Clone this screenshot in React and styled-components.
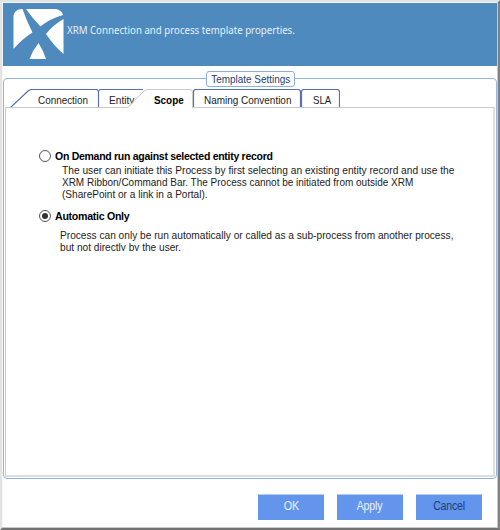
import React from 'react';
import styled, { createGlobalStyle } from 'styled-components';

const GlobalStyle = createGlobalStyle`
  * { box-sizing: border-box; }
  body { margin: 0; background: #fff; }
`;

const Window = styled.main`
  width: 500px;
  height: 530px;
  display: flex;
  flex-direction: column;
  padding: 1px;
  background: #fff;
  border-style: solid;
  border-width: 2px;
  border-color: #e3e3e3 #818181 #727272 #e3e3e3;
  box-shadow: inset -1px -1px #c8c8c8, inset 1px 1px #f6f6f6;
  font: 11px/12px 'Liberation Sans', Arial, sans-serif;
  color: #1c1c1c;
`;

const Header = styled.header`
  height: 63px;
  flex: none;
  display: flex;
  align-items: flex-start;
  padding: 5px 0 0 10px;
  background: #4e8abe;
  color: #e4f0fa;
`;

const Logo = styled.svg`
  width: 51px;
  height: 52px;
  flex: none;
`;

const Title = styled.h1`
  margin: 15px 0 0 3px;
  font: 11px/14px 'Noto Sans', 'Open Sans', sans-serif;
  white-space: nowrap;
`;

/* Narrowed run of text; $fit is its horizontal scale. */
const Narrow = styled.span`
  position: relative;
  display: inline-block;
  transform: scaleX(${p => p.$fit});
  transform-origin: ${p => (p.$centered ? 'center' : 'left')};
`;

const Group = styled.section`
  height: 401px;
  flex: none;
  display: flex;
  flex-direction: column;
  margin-top: 12px;
  padding: 0 1px 1px;
  border: 1px solid #94b6e4;
  border-radius: 4px;
`;

const Legend = styled.h2`
  align-self: center;
  width: 89px;
  height: 16px;
  flex: none;
  margin: -8px 0 0 1px;
  border: 1px solid #8eafdf;
  border-radius: 3px;
  background: #fff;
  color: #1f4173;
  font-size: 11px;
  font-weight: 400;
  line-height: 14px;
  display: flex;
  justify-content: center;
  white-space: nowrap;
`;

const Tabs = styled.nav`
  display: flex;
  height: 19px;
  flex: none;
  margin: 2px 0 -1px 5px;
  position: relative;
`;

const Tab = styled.button`
  position: relative;
  width: ${p => p.$width}px;
  height: 19px;
  margin: 0 0 0 ${p => p.$overlap || 0}px;
  padding: 3px 0 0 ${p => p.$inset}px;
  border: 0;
  background: none;
  color: ${p => (p.$active ? '#000' : '#1c1c1c')};
  font: ${p => (p.$active ? 700 : 400)} 11px/14px 'Liberation Sans', Arial, sans-serif;
  text-align: left;
  white-space: nowrap;
`;

const TabShape = styled.svg`
  position: absolute;
  inset: 0;
  width: 100%;
  height: ${p => (p.$active ? 19 : 18)}px;
  fill: #fff;
  stroke: ${p => (p.$active ? '#c9c9c9' : '#5871b5')};
  stroke-width: ${p => (p.$active ? 1 : 1.2)};
`;

const Panel = styled.div`
  flex: 1;
  padding: 41px 0 0 33px;
  border: 1px solid #c9c9c9;
  border-right: 2px solid #dedede;
  border-bottom: 2px solid #dedede;
`;

const Option = styled.label`
  display: flex;
  align-items: center;
  height: 14px;
  margin-top: ${p => p.$gap || 0}px;
  color: #000;
  font-weight: 700;
  letter-spacing: -0.3px;
  white-space: nowrap;
`;

const Radio = styled.span`
  width: 12px;
  height: 12px;
  flex: none;
  display: grid;
  place-items: center;
  margin-right: 4px;
  border: 1px solid #555;
  border-radius: 50%;

  &::after {
    content: '';
    width: 6px;
    height: 6px;
    border-radius: 50%;
    background: ${p => (p.$checked ? '#333' : 'transparent')};
  }
`;

const Description = styled.div`
  margin: ${p => p.$top}px 0 0 ${p => p.$left}px;
  height: ${p => p.$height}px;
  overflow: hidden;
`;

const Line = styled.div`
  height: 12px;
  white-space: nowrap;
`;

const Footer = styled.footer`
  display: flex;
  justify-content: flex-end;
  gap: 13px;
  padding: 15px 15px 0 0;
`;

const ActionButton = styled.button`
  width: 66px;
  height: 26px;
  padding: 0 0 2px;
  border: 0;
  border-top: 1px solid #b4cbf5;
  background: #6495ed;
  color: ${p => (p.$dark ? '#1d3c78' : '#e8f1ff')};
  font: 12px/23px 'Liberation Sans', Arial, sans-serif;
  letter-spacing: -0.2px;
`;

function TabItem({ label, active, path, fit, ...props }) {
  return (
    <Tab $active={active} {...props}>
      <TabShape $active={active}><path d={path} /></TabShape>
      <Narrow $fit={fit}>{label}</Narrow>
    </Tab>
  );
}

export default function App() {
  return (
    <>
      <GlobalStyle />
      <Window>
        <Header>
          <Logo viewBox="0 0 51 52" fill="#fff">
            <path d="M9 1C4 1 .5 4 .5 9V41Q9 31 19.500 24.500Q14 14 9.500 1Z" />
            <path d="M13 1H43Q48.500 2 50 7Q36 11 27.500 18.500Q20 11 13 1Z" />
            <path d="M50.500 11V46Q41 38 33 26Q40 17 50.500 11Z" />
            <path d="M25.500 35Q30 42 33 51H16.500Q20 42 25.500 35Z" />
          </Logo>
          <Title><Narrow $fit={0.88}>XRM Connection and process template properties.</Narrow></Title>
        </Header>
        <Group>
          <Legend><Narrow $fit={0.905} $centered>Template Settings</Narrow></Legend>
          <Tabs>
            <TabItem label="Connection" fit={0.9} $width={89} $inset={28} path="M.5 18.500L17 3Q19.500 .5 22 .5H86Q88.500 .5 88.500 3V19.500" />
            <TabItem label="Entity" fit={0.92} $width={46} $inset={10} path="M-.5 19.500V3Q-.5 .5 2 .5H44" />
            <TabItem label="Scope" active fit={0.9} $width={67} $overlap={-19} $inset={28} path="M-1 20.500L.5 18.500L3 17.500L17 3Q19.500 .5 22 .5H64Q66.500 .5 66.500 3V20.500" />
            <TabItem label="Naming Convention" fit={0.905} $width={108} $inset={11} path="M.5 19.500V3Q.5 .5 3 .5H105Q107.500 .5 107.500 3V19.500" />
            <TabItem label="SLA" fit={0.88} $width={39} $inset={12} path="M.5 19.500V3Q.5 .5 3 .5H36Q38.500 .5 38.500 3V19.500" />
          </Tabs>
          <Panel>
            <Option><Radio /><Narrow $fit={0.956}>On Demand run against selected entity record</Narrow></Option>
            <Description $top={1} $left={23} $height={36}>
              <Line><Narrow $fit={0.926}>The user can initiate this Process by first selecting an existing entity record and use the</Narrow></Line>
              <Line><Narrow $fit={0.908}>XRM Ribbon/Command Bar. The Process cannot be initiated from outside XRM</Narrow></Line>
              <Line><Narrow $fit={0.916}>(SharePoint or a link in a Portal).</Narrow></Line>
            </Description>
            <Option $gap={9}><Radio $checked /><Narrow $fit={0.965}>Automatic Only</Narrow></Option>
            <Description $top={6} $left={21} $height={22}>
              <Line><Narrow $fit={0.922}>Process can only be run automatically or called as a sub-process from another process,</Narrow></Line>
              <Line><Narrow $fit={0.92}>but not directly by the user.</Narrow></Line>
            </Description>
          </Panel>
        </Group>
        <Footer>
          <ActionButton><Narrow $fit={0.9} $centered>OK</Narrow></ActionButton>
          <ActionButton><Narrow $fit={0.88} $centered>Apply</Narrow></ActionButton>
          <ActionButton $dark><Narrow $fit={0.88} $centered>Cancel</Narrow></ActionButton>
        </Footer>
      </Window>
    </>
  );
}
